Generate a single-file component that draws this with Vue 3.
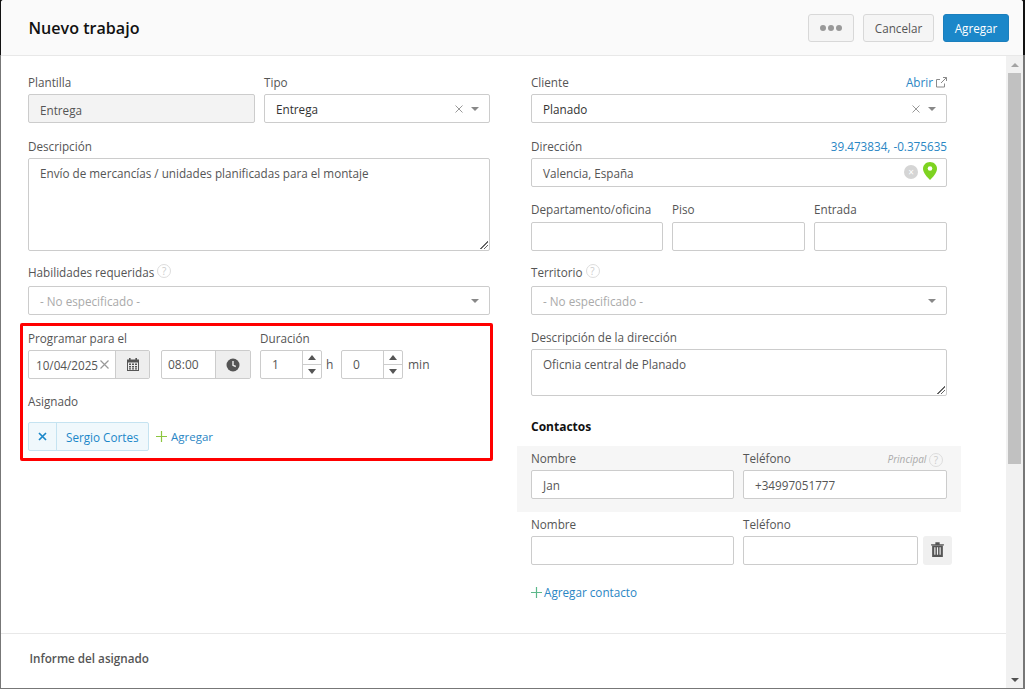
<script setup>
const unspecified = '- No especificado -'
</script>

<template>
  <div class="frame">
  <div class="window">
    <header class="top">
      <h1>Nuevo trabajo</h1>
      <div class="actions">
        <button class="btn more"><i></i><i></i><i></i></button>
        <button class="btn cancel">Cancelar</button>
        <button class="btn add">Agregar</button>
      </div>
    </header>

    <div class="body">
      <div class="scroll-content">
        <div class="columns">
          <section class="col left">
            <div class="row two">
              <div class="field">
                <label>Plantilla</label>
                <div class="box disabled">Entrega</div>
              </div>
              <div class="field">
                <label>Tipo</label>
                <div class="box select dark">
                  <span>Entrega</span>
                  <svg class="sel-x" width="8" height="8" viewBox="0 0 8 8"><path d="M.5.5l7 7M7.500.5l-7 7" stroke="#999" stroke-width="1" fill="none"/></svg><span class="caret"></span>
                </div>
              </div>
            </div>

            <div class="field gap15">
              <label>Descripción</label>
              <div class="box area tall">Envío de mercancías / unidades planificadas para el montaje<span class="grip"></span></div>
            </div>

            <div class="field gap13">
              <label class="lab6">Habilidades requeridas <span class="help">?</span></label>
              <div class="box select muted">
                <span>{{ unspecified }}</span><span class="caret"></span>
              </div>
            </div>

            <div class="highlighted">
              <div class="sched">
                <div class="field">
                  <label>Programar para el</label>
                  <div class="datetime">
                    <div class="group date">
                      <span class="val">10/04/2025</span>
                      <svg class="date-x" width="9" height="9" viewBox="0 0 9 9"><path d="M.5.5l8 8M8.500.5l-8 8" stroke="#999" stroke-width="1.200" fill="none"/></svg>
                      <span class="addon">
                        <svg width="12" height="13" viewBox="0 0 12 13"><path fill="#555" d="M2 0h1.600v1.500h4.800V0H10v1.500h2V13H0V1.500h2zM1 4.500v7.500h10V4.500z"/><path fill="#555" d="M2 5.500h2v1.600H2zM5 5.500h2v1.600H5zM8 5.500h2v1.600H8zM2 8h2v1.600H2zM5 8h2v1.600H5zM8 8h2v1.600H8zM2 10.300h2v1.200H2zM5 10.300h2v1.200H5zM8 10.300h2v1.200H8z"/></svg>
                      </span>
                    </div>
                    <div class="group time">
                      <span class="val">08:00</span>
                      <span class="addon">
                        <svg width="14" height="14" viewBox="0 0 14 14"><circle cx="7" cy="7" r="6.500" fill="#555"/><path d="M7 3v4.300l2.800 1.200" fill="none" stroke="#eee" stroke-width="1.400"/></svg>
                      </span>
                    </div>
                  </div>
                </div>
                <div class="field">
                  <label>Duración</label>
                  <div class="dur">
                    <div class="spin"><span class="num">1</span><span class="arrows"><b class="up"></b><b class="down"></b></span></div>
                    <span class="unit h">h</span>
                    <div class="spin"><span class="num">0</span><span class="arrows"><b class="up"></b><b class="down"></b></span></div>
                    <span class="unit min">min</span>
                  </div>
                </div>
              </div>
              <div class="field assign">
                <label>Asignado</label>
                <div class="assignee">
                  <div class="chip">
                    <span class="chip-x">
                      <svg width="9" height="9" viewBox="0 0 9 9"><path d="M1 1l7 7M8 1L1 8" stroke="#1b87c9" stroke-width="1.700" fill="none"/></svg>
                    </span>
                    <span class="chip-name">Sergio Cortes</span>
                  </div>
                  <a class="link plus-link">
                    <svg width="11" height="11" viewBox="0 0 11 11"><path d="M5.500 0v11M0 5.500h11" stroke="#8cc63f" stroke-width="1.200"/></svg>
                    Agregar
                  </a>
                </div>
              </div>
            </div>
          </section>

          <section class="col right">
            <div class="field">
              <div class="label-row">
                <label>Cliente</label>
                <a class="link">Abrir
                  <svg class="ext" width="11" height="11" viewBox="0 0 11 11"><path d="M8.500 6.500v3.500h-8V2.500H4M5 6l5.500-5.500M7 .5h3.500V4" fill="none" stroke="#8a8a8a" stroke-width="1"/></svg>
                </a>
              </div>
              <div class="box select dark">
                <span>Planado</span>
                <svg class="sel-x" width="8" height="8" viewBox="0 0 8 8"><path d="M.5.5l7 7M7.500.5l-7 7" stroke="#999" stroke-width="1" fill="none"/></svg><span class="caret"></span>
              </div>
            </div>

            <div class="field gap15">
              <div class="label-row">
                <label>Dirección</label>
                <a class="link">39.473834, -0.375635</a>
              </div>
              <div class="box select">
                <span>Valencia, España</span>
                <span class="clear-dot">×</span>
                <svg class="pin" width="14" height="18" viewBox="0 0 14 18"><path fill="#7ed321" d="M7 0c3.900 0 7 2.900 7 6.700C14 10.800 10 15 7 18 4 15 0 10.800 0 6.700 0 2.900 3.100 0 7 0z"/><circle cx="7" cy="6.500" r="2.300" fill="#fff"/></svg>
              </div>
            </div>

            <div class="row three gap14">
              <div class="field"><label class="lab5">Departamento/oficina</label><div class="box"></div></div>
              <div class="field"><label class="lab5">Piso</label><div class="box"></div></div>
              <div class="field"><label class="lab5">Entrada</label><div class="box"></div></div>
            </div>

            <div class="field gap13">
              <label class="lab6">Territorio <span class="help">?</span></label>
              <div class="box select muted">
                <span>{{ unspecified }}</span><span class="caret"></span>
              </div>
            </div>

            <div class="field gap14">
              <label>Descripción de la dirección</label>
              <div class="box area short">Oficnia central de Planado<span class="grip"></span></div>
            </div>

            <h2 class="contacts-title">Contactos</h2>

            <div class="contact primary">
              <div class="field"><label>Nombre</label><div class="box">Jan</div></div>
              <div class="field phone">
                <div class="label-row">
                  <label>Teléfono</label>
                  <span class="principal">Principal <span class="help">?</span></span>
                </div>
                <div class="box">+34997051777</div>
              </div>
            </div>
            <div class="contact second">
              <div class="field"><label>Nombre</label><div class="box"></div></div>
              <div class="field phone">
                <label>Teléfono</label>
                <div class="phone-line">
                  <div class="box"></div>
                  <button class="trash">
                    <svg width="13" height="15" viewBox="0 0 12 14"><path fill="#555" d="M0 2h12v1.300H0zM4 .3h4V2H4z"/><path fill="#555" d="M1 3.300h10V14H1zM3 5v7h1.100V5zM5.450 5v7h1.100V5zM7.900 5v7H9V5z" fill-rule="evenodd"/></svg>
                  </button>
                </div>
              </div>
            </div>
            <a class="link add-contact">
              <svg width="11" height="11" viewBox="0 0 11 11"><path d="M5.500 0v11M0 5.500h11" stroke="#5cb88a" stroke-width="1.200"/></svg>
              Agregar contacto
            </a>
          </section>
        </div>
        <div class="report">Informe del asignado</div>
      </div>
      <div class="scrollbar">
        <span class="sb-up"></span>
        <span class="sb-thumb"></span>
        <span class="sb-down"></span>
      </div>
    </div>
  </div>
  </div>
</template>

<style>
html, body { margin: 0; background: #777; overflow: hidden; }
</style>

<style scoped>
* { box-sizing: border-box; }
.frame {
  width: 1025px;
  height: 689px;
  padding: 0 2px 1px 1px;
  background: linear-gradient(#111 0 55px, #777 55px);
}
.window {
  width: 1022px;
  height: 688px;
  border-radius: 3px 3px 0 0;
  background: #fff;
  font-family: "Open Sans", sans-serif;
  font-size: 11.7px;
  color: #555;
  display: flex;
  flex-direction: column;
  overflow: hidden;
}
.top {
  height: 56px;
  flex: none;
  background: #fafafa;
  border-bottom: 1px solid #e8e8e8;
  display: flex;
  align-items: center;
  justify-content: space-between;
  padding: 0 14px 0 27.500px;
}
h1 {
  margin: 0;
  font-size: 16.100px;
  font-weight: 600;
  color: #111;
}
.actions { display: flex; gap: 9px; }
.btn {
  height: 28px;
  border-radius: 3px;
  border: 1px solid #d8d8d8;
  background: #f5f5f5;
  font: inherit;
  color: #555;
  padding: 0;
}
.more { width: 46px; display: flex; align-items: center; justify-content: center; gap: 2px; }
.more i { width: 6px; height: 6px; border-radius: 50%; background: #999; }
.cancel { width: 71px; }
.add { width: 66px; background: #1b87c9; border-color: #1b7fbd; color: #fff; }
.body { flex: 1; display: flex; min-height: 0; }
.scroll-content { flex: 1; min-width: 0; display: flex; flex-direction: column; }
.columns { flex: 1; display: flex; padding: 18px 0 0 27px; }
.col.left { width: 462px; flex: none; }
.col.right { width: 416px; flex: none; margin-left: 41px; }
.row { display: grid; }
.row.two { grid-template-columns: 227px 226px; column-gap: 9px; }
.row.three { grid-template-columns: 132px 133px 133px; column-gap: 9px; }
.field { display: flex; flex-direction: column; min-width: 0; }
label { display: block; height: 16px; line-height: 16px; margin-bottom: 4px; color: #555; white-space: nowrap; }
.lab6 { margin-bottom: 6px; }
.lab5 { margin-bottom: 5px; }
.gap15 { margin-top: 15px; }
.gap13 { margin-top: 13px; }
.gap14 { margin-top: 14px; }
.box {
  height: 29px;
  border: 1px solid #ccc;
  border-radius: 2px;
  background: #fff;
  padding: 0 11px;
  line-height: 29px;
  color: #555;
  position: relative;
}
.disabled { background: #f3f3f3; line-height: 30px; }
.select { display: flex; align-items: center; padding-top: 0; line-height: 16px; }
.select > span:first-child { flex: 1; }
.dark { color: #333; }
.muted { color: #aaa; }
.sel-x { margin-right: 8px; flex: none; }
.caret {
  width: 0; height: 0;
  border-left: 4px solid transparent;
  border-right: 4px solid transparent;
  border-top: 4px solid #888;
  margin-right: -1px;
  margin-top: 1px;
}
.area { line-height: 16px; padding-top: 6px; }
.tall { height: 93px; }
.short { height: 47px; }
.grip {
  position: absolute;
  right: 1px; bottom: 1px;
  width: 8px; height: 8px;
  background: linear-gradient(135deg, transparent 0 50%, #666 50% 57%, transparent 57% 70%, #666 70% 78%, transparent 78%);
}
.help {
  display: inline-block;
  width: 14px; height: 14px;
  border: 1px solid #ddd;
  border-radius: 50%;
  font-size: 10px;
  line-height: 12px;
  text-align: center;
  color: #ccc;
  vertical-align: 2px;
  font-style: normal;
}
.highlighted { position: relative; margin-top: 15px; }
.highlighted::after {
  content: "";
  position: absolute;
  left: -8px; right: -3px; top: -7px; bottom: -10px;
  border: 3px solid #f00;
  border-radius: 2px;
  pointer-events: none;
}
.sched { display: flex; gap: 9px; }
.datetime { display: flex; gap: 11px; }
.group {
  height: 29px;
  border: 1px solid #ccc;
  border-radius: 2px;
  display: flex;
  align-items: center;
  position: relative;
}
.date { width: 122px; }
.date .addon { width: 34px; }
.time { width: 90px; }
.val { padding-left: 7px; flex: 1; font-size: 12px; }
.date .val { font-size: 11.700px; }
.time .val { padding-left: 6px; }
.date-x { position: absolute; left: 71px; top: 9px; }
.addon {
  width: 35px;
  height: 100%;
  background: #eee;
  border-left: 1px solid #ccc;
  display: flex;
  align-items: center;
  justify-content: center;
}
.dur { display: flex; align-items: center; }
.spin {
  width: 62px; height: 29px;
  border: 1px solid #ccc;
  border-radius: 2px;
  display: flex;
}
.num { flex: 1; padding-left: 11px; line-height: 27px; font-size: 12px; }
.arrows { width: 19px; border-left: 1px solid #ccc; display: flex; flex-direction: column; }
.arrows b { flex: 1; display: flex; align-items: center; justify-content: center; }
.arrows b::before {
  content: "";
  border-left: 4px solid transparent;
  border-right: 4px solid transparent;
}
.up::before { border-bottom: 5px solid #555; }
.down { border-top: 1px solid #ccc; }
.down::before { border-top: 5px solid #555; }
.unit { color: #555; font-size: 12px; }
.unit.h { width: 19px; padding-left: 4px; }
.unit.min { margin-left: 5px; }
.assign { margin-top: 14px; }
.assign label { margin-bottom: 13px; }
.assignee { display: flex; align-items: center; gap: 7px; }
.chip {
  height: 29px;
  width: 121px;
  display: flex;
  background: #f0f8fc;
  border: 1px solid #c5e3f1;
  border-radius: 2px;
  color: #1b87c9;
  line-height: 29px;
}
.chip-x { width: 28px; border-right: 1px solid #c5e3f1; display: flex; align-items: center; justify-content: center; }
.chip-name { padding-left: 9px; white-space: nowrap; }
.link { color: #2a86c4; text-decoration: none; white-space: nowrap; }
.plus-link { font-size: 11.500px; }
.plus-link svg { margin-right: 1px; vertical-align: -1px; }
.add-contact svg { margin-right: -1px; vertical-align: -1px; }
.label-row { display: flex; justify-content: space-between; height: 16px; line-height: 16px; margin-bottom: 4px; }
.label-row label { margin: 0; }
.ext { vertical-align: -1px; }
.clear-dot {
  width: 14px; height: 14px;
  border-radius: 50%;
  background: #d5d5d5;
  color: #fff;
  font-size: 10px;
  line-height: 14px;
  text-align: center;
  margin-right: 5px;
  margin-top: -2px;
}
.pin { margin-right: -2px; margin-top: -3px; flex: none; }
.contacts-title {
  margin: 23px 0 0;
  font-size: 12px;
  line-height: 16px;
  font-weight: 700;
  color: #111;
}
.contact {
  display: grid;
  grid-template-columns: 203px 204px;
  column-gap: 9px;
  margin: 0 -14px;
  padding: 4px 14px 13px;
  width: 444px;
}
.primary { background: #f6f6f6; margin-top: 11px; height: 66px; }
.second { padding-bottom: 0; }
.principal { color: #aaa; font-style: italic; font-size: 10px; padding-right: 4px; line-height: 18px; }
.principal .help { vertical-align: -1px; }
.phone-line { display: flex; gap: 5px; }
.phone-line .box { width: 175px; flex: none; }
.trash {
  width: 29px; height: 29px;
  border: 0;
  border-radius: 3px;
  background: #f0f0f0;
  display: flex;
  align-items: center;
  justify-content: center;
  padding: 0 0 3px;
  flex: none;
}
.add-contact { display: block; margin-top: 19px; height: 16px; line-height: 16px; }
.report {
  height: 55px;
  flex: none;
  border-top: 1px solid #e8e8e8;
  padding-left: 28.500px;
  line-height: 49px;
  color: #555;
  font-weight: 600;
}
.scrollbar {
  width: 17px;
  flex: none;
  background: #f1f1f1;
  display: flex;
  flex-direction: column;
}
.sb-up { height: 17px; display: flex; align-items: center; justify-content: center; flex: none; }
.sb-up::before { content: ""; border-left: 4px solid transparent; border-right: 4px solid transparent; border-bottom: 4px solid #a3a3a3; }
.sb-thumb { width: 13px; height: 391px; margin: 0 2px; background: #c1c1c1; flex: none; }
.sb-down { margin-top: auto; height: 17px; display: flex; align-items: center; justify-content: center; }
.sb-down::before { content: ""; border-left: 4px solid transparent; border-right: 4px solid transparent; border-top: 4px solid #505050; }
</style>
